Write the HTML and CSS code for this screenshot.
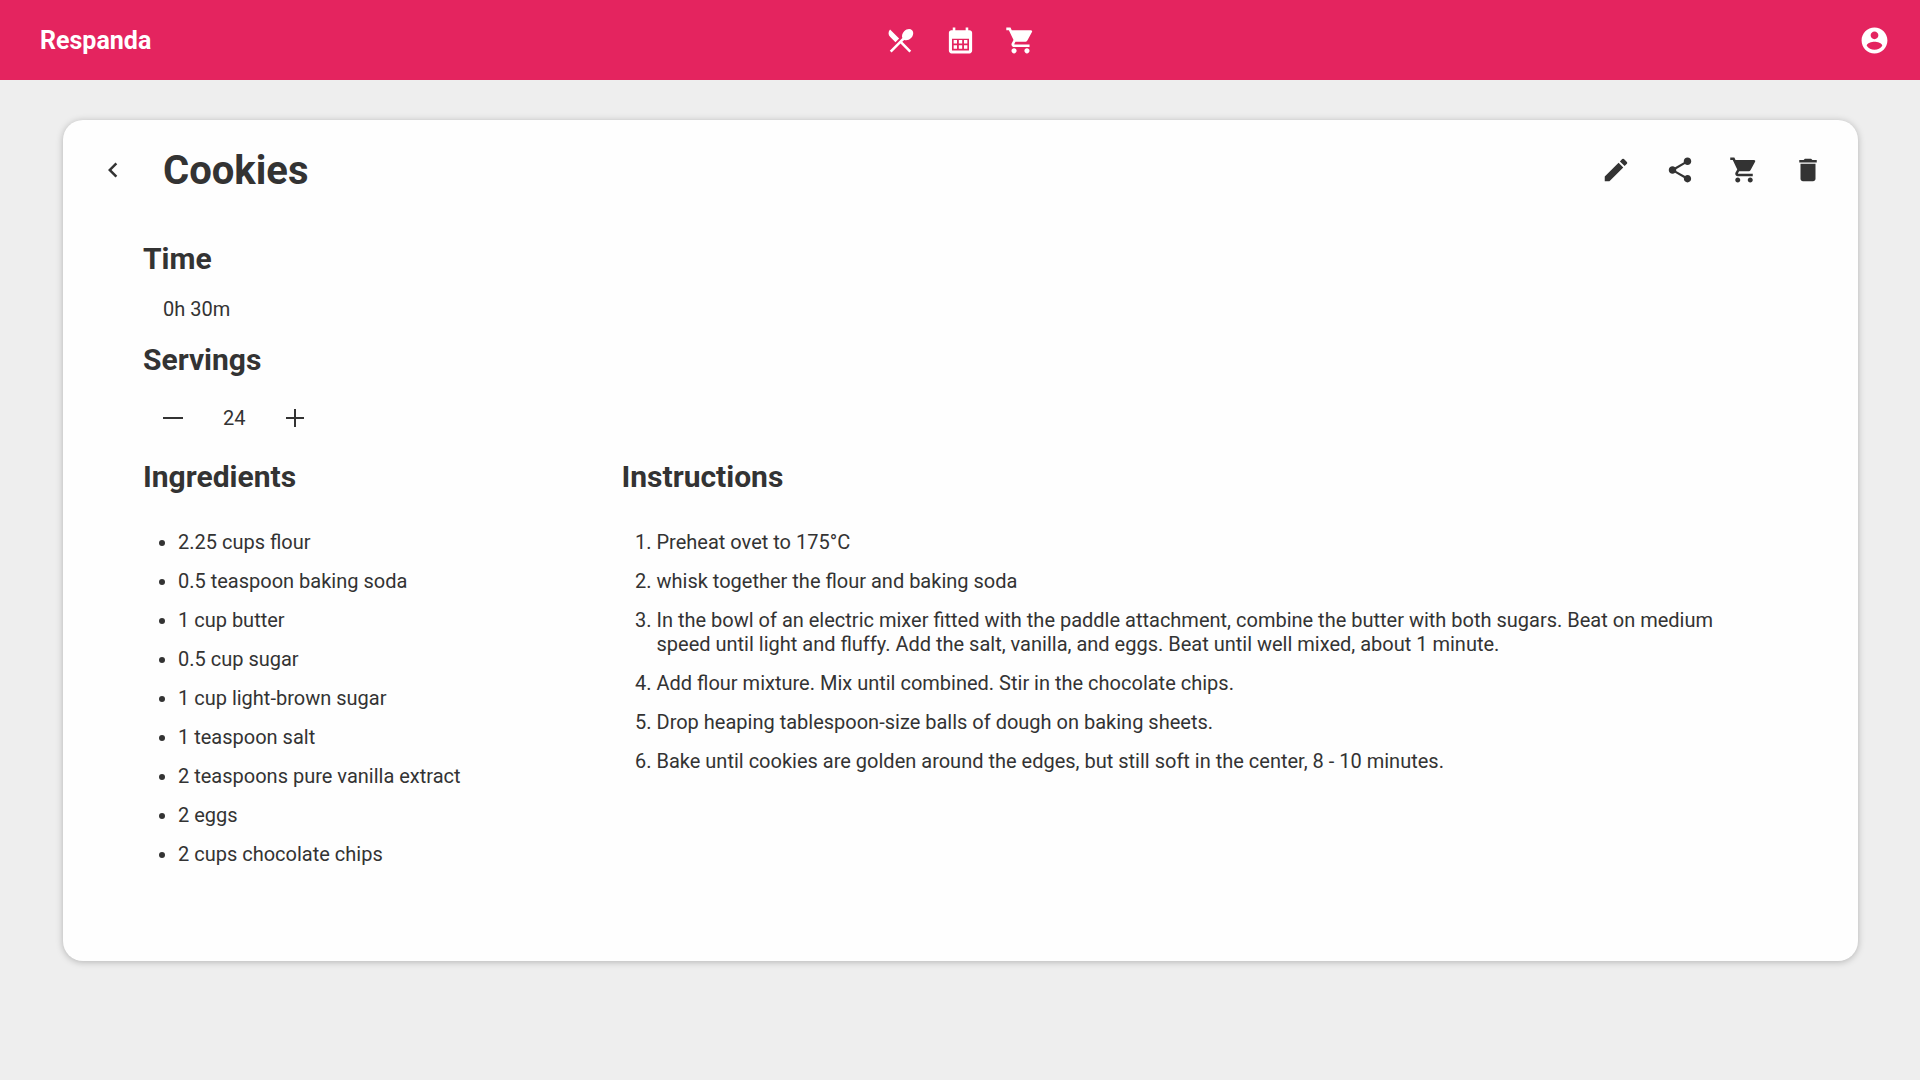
FILE: index.html
```html
<!DOCTYPE html>
<html lang="en">
<head>
<meta charset="utf-8">
<meta name="viewport" content="width=device-width, initial-scale=1">
<title>Cookies - Respanda</title>
<link rel="stylesheet" href="styles.css">
</head>
<body>
<header class="topbar">
  <a class="brand" href="#">Respanda</a>
  <nav class="nav" aria-label="Main">
    <a href="#" aria-label="Recipes"><svg class="icon-nav" viewBox="0 0 24 24"><path d="M8.1 13.34l2.83-2.83L3.91 3.5a4.008 4.008 0 0 0 0 5.66l4.19 4.18zm6.78-1.81c1.53.71 3.68.21 5.27-1.38 1.91-1.91 2.28-4.65.81-6.12-1.46-1.46-4.2-1.1-6.12.81-1.59 1.59-2.09 3.74-1.38 5.27L3.7 19.87l1.41 1.41L12 14.41l6.88 6.88 1.41-1.41L13.41 13l1.47-1.47z"/></svg></a>
    <a href="#" aria-label="Calendar"><svg class="icon-nav" viewBox="0 0 24 24"><path d="M19 4h-1V2h-2v2H8V2H6v2H5c-1.110 0-2 .9-2 2v14c0 1.100.89 2 2 2h14c1.100 0 2-.9 2-2V6c0-1.100-.9-2-2-2zm-.4 15.800H5.400v-9.200h13.200v9.200zM9.300 14.300H6.700v-2.600h2.600v2.600zm4 0h-2.600v-2.600h2.600v2.600zm4 0h-2.600v-2.600h2.600v2.600zm-8 4H6.700v-2.600h2.600v2.600zm4 0h-2.600v-2.600h2.600v2.600zm4 0h-2.600v-2.600h2.600v2.600z"/></svg></a>
    <a href="#" aria-label="Shopping list"><svg class="icon-nav" viewBox="0 0 24 24"><path d="M7 18c-1.1 0-1.99.9-1.99 2S5.900 22 7 22s2-.9 2-2-.9-2-2-2zM1 2v2h2l3.600 7.590-1.350 2.450c-.16.28-.25.61-.25.96 0 1.100.9 2 2 2h12v-2H7.420c-.14 0-.25-.11-.25-.25l.03-.12.9-1.630h7.450c.75 0 1.410-.41 1.750-1.030l3.580-6.490A1.003 1.003 0 0 0 20 4H5.210l-.94-2H1zm16 16c-1.100 0-1.990.9-1.990 2s.89 2 1.990 2 2-.9 2-2-.9-2-2-2z"/></svg></a>
  </nav>
  <a class="account" href="#" aria-label="Account"><svg class="icon-nav" viewBox="0 0 24 24"><path d="M12 2C6.480 2 2 6.480 2 12s4.480 10 10 10 10-4.480 10-10S17.520 2 12 2zm0 3c1.660 0 3 1.340 3 3s-1.340 3-3 3-3-1.340-3-3 1.340-3 3-3zm0 14.200c-2.500 0-4.710-1.280-6-3.220.03-1.990 4-3.080 6-3.080 1.990 0 5.970 1.090 6 3.080-1.290 1.940-3.500 3.220-6 3.220z"/></svg></a>
</header>

<main class="card">
  <div class="card-head">
    <button class="back" type="button" aria-label="Back"><svg class="icon" viewBox="0 0 24 24"><path d="M15.410 16.590L10.830 12l4.580-4.590L14 6l-6 6 6 6 1.410-1.410z"/></svg></button>
    <h1 class="title">Cookies</h1>
    <div class="actions">
      <button type="button" aria-label="Edit"><svg class="icon" viewBox="0 0 24 24"><path d="M3 17.250V21h3.750L17.810 9.940l-3.750-3.750L3 17.250zM20.710 7.040a.996.996 0 0 0 0-1.410l-2.340-2.340a.996.996 0 0 0-1.410 0l-1.830 1.830 3.750 3.750 1.830-1.830z"/></svg></button>
      <button type="button" aria-label="Share"><svg class="icon" viewBox="0 0 24 24"><path d="M18 16.080c-.76 0-1.440.3-1.960.77L8.910 12.700c.05-.23.09-.46.09-.7s-.04-.47-.09-.7l7.050-4.110c.54.5 1.250.81 2.040.81 1.660 0 3-1.340 3-3s-1.340-3-3-3-3 1.340-3 3c0 .24.04.47.09.7L8.040 9.810C7.500 9.310 6.790 9 6 9c-1.660 0-3 1.340-3 3s1.340 3 3 3c.79 0 1.500-.31 2.040-.81l7.120 4.160c-.05.21-.08.43-.08.65 0 1.610 1.310 2.920 2.920 2.920s2.920-1.310 2.920-2.920-1.310-2.920-2.920-2.920z"/></svg></button>
      <button type="button" aria-label="Add to shopping list"><svg class="icon" viewBox="0 0 24 24"><path d="M7 18c-1.100 0-1.990.9-1.990 2S5.900 22 7 22s2-.9 2-2-.9-2-2-2zM1 2v2h2l3.600 7.590-1.350 2.450c-.16.28-.25.61-.25.96 0 1.100.9 2 2 2h12v-2H7.420c-.14 0-.25-.11-.25-.25l.03-.12.9-1.630h7.450c.75 0 1.410-.41 1.750-1.030l3.580-6.490A1.003 1.003 0 0 0 20 4H5.210l-.94-2H1zm16 16c-1.100 0-1.990.9-1.990 2s.89 2 1.990 2 2-.9 2-2-.9-2-2-2z"/></svg></button>
      <button type="button" aria-label="Delete"><svg class="icon" viewBox="0 0 24 24"><path d="M6 19c0 1.100.9 2 2 2h8c1.100 0 2-.9 2-2V7H6v12zM19 4h-3.500l-1-1h-5l-1 1H5v2h14V4z"/></svg></button>
    </div>
  </div>

  <div class="recipe">
    <section>
      <h2>Time</h2>
      <p class="time">0h 30m</p>
    </section>
    <section>
      <h2>Servings</h2>
      <div class="servings">
        <button type="button" aria-label="Fewer servings"><svg class="icon-step" viewBox="0 0 20 20"><path d="M0 9h20v2H0z"/></svg></button>
        <output>24</output>
        <button type="button" aria-label="More servings"><svg class="icon-step" viewBox="0 0 20 20"><path d="M1 9h8V1h2v8h8v2h-8v8H9v-8H1z"/></svg></button>
      </div>
    </section>
    <div class="columns">
      <section>
        <h2>Ingredients</h2>
        <ul>
          <li>2.25 cups flour</li>
          <li>0.5 teaspoon baking soda</li>
          <li>1 cup butter</li>
          <li>0.5 cup sugar</li>
          <li>1 cup light-brown sugar</li>
          <li>1 teaspoon salt</li>
          <li>2 teaspoons pure vanilla extract</li>
          <li>2 eggs</li>
          <li>2 cups chocolate chips</li>
        </ul>
      </section>
      <section>
        <h2>Instructions</h2>
        <ol>
          <li>Preheat ovet to 175°C</li>
          <li>whisk together the flour and baking soda</li>
          <li>In the bowl of an electric mixer fitted with the paddle attachment, combine the butter with both sugars. Beat on medium speed until light and fluffy. Add the salt, vanilla, and eggs. Beat until well mixed, about 1 minute.</li>
          <li>Add flour mixture. Mix until combined. Stir in the chocolate chips.</li>
          <li>Drop heaping tablespoon-size balls of dough on baking sheets.</li>
          <li>Bake until cookies are golden around the edges, but still soft in the center, 8 - 10 minutes.</li>
        </ol>
      </section>
    </div>
  </div>
</main>
</body>
</html>
```
FILE: styles.css
```css
* {
  box-sizing: border-box;
}

body {
  margin: 0;
  background: #eee;
  color: #333;
  font: 20px/24px Roboto, sans-serif;
}

h1,
h2,
p {
  margin: 0;
}

button {
  display: flex;
  padding: 0;
  border: 0;
  background: none;
  color: inherit;
  font: inherit;
  cursor: pointer;
}

svg {
  display: block;
  fill: currentColor;
}

.icon {
  width: 30px;
  height: 30px;
}

.icon-nav {
  width: 31px;
  height: 31px;
}

.icon-step {
  width: 20px;
  height: 20px;
}

.topbar {
  display: grid;
  grid-template-columns: 1fr auto 1fr;
  align-items: center;
  height: 80px;
  padding: 0 30px;
  background: #e4245f;
}

.topbar a {
  color: #fff;
  text-decoration: none;
}

.brand {
  justify-self: start;
  padding: 2px 0 0 10px;
  font-size: 25px;
  line-height: 32px;
  font-weight: 700;
}

.nav {
  display: flex;
  gap: 29px;
}

.account {
  justify-self: end;
}

.card {
  margin: 40px 62px 40px 63px;
  padding-bottom: 95px;
  border-radius: 20px;
  background: #fefefe;
  box-shadow: 0 1px 7px rgba(0, 0, 0, 0.25);
}

.card-head {
  display: flex;
  align-items: center;
  gap: 35px;
  height: 100px;
  padding: 0 35px;
}

.title {
  padding-top: 2px;
  font-size: 40px;
  line-height: 50px;
  font-weight: 700;
}

.actions {
  display: flex;
  gap: 34px;
  margin-left: auto;
}

.recipe {
  padding: 0 120px 0 80px;
}

h2 {
  padding: 21px 0 20px;
  font-size: 30px;
  line-height: 36px;
  font-weight: 700;
}

.time {
  padding-left: 20px;
}

.servings {
  display: flex;
  align-items: center;
  gap: 40px;
  height: 40px;
  padding-left: 20px;
}

.columns {
  display: grid;
  grid-template-columns: 3fr 7fr;
}

ul,
ol {
  margin: 0;
  padding-left: 35px;
}

li {
  margin-top: 15px;
}
```
